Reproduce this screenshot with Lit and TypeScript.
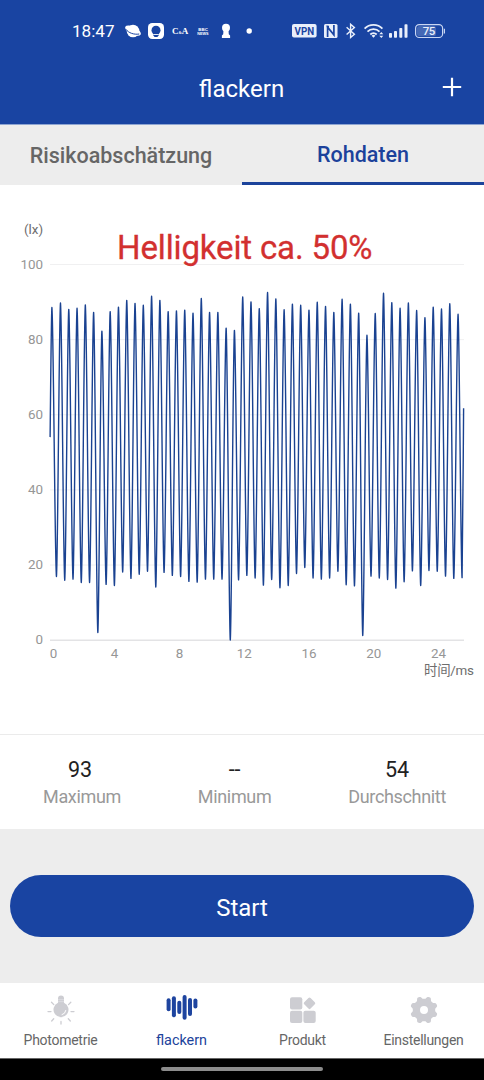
import { LitElement, html, svg, css } from "lit";
import { customElement } from "lit/decorators.js";

const PEAKS = [
  88.5, 89.7, 88, 88.3, 89.2, 87.2, 82.2, 87.4, 88.6, 90.4, 89.6, 89.1, 91.5, 90.4, 87.4, 87.6, 87.8, 87, 90.9, 87.2,
  87.2, 83, 82.4, 91.3, 90, 88.2, 92.5, 90.8, 87.9, 89.4, 89.1, 87.8, 89.9, 88.8, 87.2, 90.7, 89.4, 87, 81.1, 86.9,
  92.3, 89.8, 88.3, 89.7, 87.7, 85.8, 88.6, 88.1, 89.5, 86.7,
];
const TROUGHS = [
  16.9, 15.9, 16.2, 15.3, 15.3, 2, 14.8, 14.5, 18.1, 16.4, 17.5, 18.3, 14.1, 18, 17.2, 16.9, 15.6, 15.4, 16.2, 16.2,
  16.2, 0, 16, 17.2, 16.5, 14.6, 16.1, 13.9, 14.5, 17.7, 19.3, 16.5, 16.2, 16.5, 18.3, 14.7, 14.4, 1.2, 17, 16.5,
  16.1, 13.8, 15.5, 18.4, 14.5, 18.5, 18.3, 17, 16.4, 16.6,
];

const toY = (lux: number) => 455 - lux * 3.757;

function wavePath(): string {
  const pts: [number, number][] = [[50.1, toY(54)]];
  PEAKS.forEach((peak, i) => {
    pts.push([(i === 0 ? 51.9 : 52.2) + i * 8.283, toY(peak)]);
    pts.push([56.45 + i * 8.278, toY(TROUGHS[i])]);
  });
  pts.push([463.6, toY(61.7)]);
  let d = `M${pts[0][0]} ${pts[0][1]}`;
  for (let i = 1; i < pts.length; i++) {
    const [x0, y0] = pts[i - 1];
    const [x1, y1] = pts[i];
    const dx = x1 - x0;
    const dy = y1 - y0;
    const startBend = i === 1 ? 0.4 : 0.04;
    const endBend = i === pts.length - 1 ? 0.4 : 0.04;
    d += `C${x0 + dx * 0.33} ${y0 + dy * startBend} ${x1 - dx * 0.33} ${y1 - dy * endBend} ${x1} ${y1}`;
  }
  return d;
}

@customElement("status-bar")
class StatusBar extends LitElement {
  static styles = css`
    :host { display: flex; align-items: center; height: 62px; padding: 0 37px 0 72px; color: #fff; box-sizing: border-box; }
    .time { font: 400 17.1px/20px Roboto, sans-serif; width: 52px; white-space: nowrap; }
    .left { display: block; width: 130px; height: 20px; }
    .right { display: block; width: 156px; height: 20px; margin-left: auto; }
    .serif { font: 700 9px "Liberation Serif", serif; }
    .amp { font-size: 4px; }
    .micro { font: 700 4.2px "Liberation Sans", sans-serif; }
    .vpn { font: 700 11.5px Roboto, sans-serif; }
    .level { font: 500 11.5px Roboto, sans-serif; }
  `;
  render() {
    return html`
      <span class="time">18:47</span>
      <svg class="left" viewBox="124 21 130 20" fill="#fff">
        <ellipse cx="133" cy="31" rx="6.3" ry="6.3" />
        <ellipse cx="133" cy="30.6" rx="8.6" ry="3.8" transform="rotate(27 133 30.6)" />
        <path d="M126 29.300c2.400 3.600 8 5.600 13.200 4.700" fill="none" stroke="#1944a2" stroke-width="1" />
        <rect x="148" y="23" width="16" height="16" rx="4.2" />
        <circle cx="156" cy="30.2" r="4.5" fill="#1944a2" />
        <path d="M153.400 33h5.200v2.500l-1.200 1.500h-2.800l-1.200-1.500z" fill="#1944a2" />
        <path d="M153.300 34.500h5.400" stroke="#fff" stroke-width="0.900" />
        <text class="serif" x="172" y="34.200">C<tspan class="amp">&amp;</tspan>A</text>
        <text class="micro" x="198.300" y="30.800" textLength="9.500" lengthAdjust="spacingAndGlyphs">BBC</text>
        <text class="micro" x="197.300" y="34.600" textLength="11.200" lengthAdjust="spacingAndGlyphs">NEWS</text>
        <circle cx="226" cy="27.800" r="4" />
        <path d="M223.600 29h4.800l.4 5.200 1.300 1.300v2.500h-8.200v-2.500l1.300-1.300z" />
        <circle cx="249.200" cy="31" r="2.700" />
      </svg>
      <svg class="right" viewBox="291 21 156 20" fill="#e9effb">
        <rect x="292" y="24" width="24.600" height="13.600" rx="2" />
        <text class="vpn" x="294.600" y="35" fill="#1944a2" textLength="19.600" lengthAdjust="spacingAndGlyphs">VPN</text>
        <rect x="324" y="24" width="13.500" height="14" rx="1.500" />
        <path d="M327.600 37v-9.800l6.300 7.600V25M326.500 26.500h2.500" fill="none" stroke="#1944a2" stroke-width="1.700" />
        <path d="M346.600 27.200l7.800 7-3.800 3.300V24.300l3.800 3.300-7.800 7" fill="none" stroke="#e9effb" stroke-width="1.400" />
        <g fill="none" stroke="#e9effb" stroke-width="1.800">
          <path d="M364.600 28.600a12.600 12.600 0 0 1 17.800 0" />
          <path d="M367.500 31.700a8.500 8.500 0 0 1 12 0" />
          <path d="M370.300 34.500a4.600 4.600 0 0 1 6.400 0" />
        </g>
        <path d="M371.600 35.700a2.800 2.800 0 0 1 3.800 0l-1.900 2.100z" />
        <path d="M379.300 34.300l2-2.300 2 2.300zM379.300 35.700l2 2.300 2-2.300z" />
        <rect x="389" y="33" width="3" height="4.800" rx=".8" />
        <rect x="394" y="31" width="3" height="6.800" rx=".8" />
        <rect x="399.300" y="28" width="3" height="9.800" rx=".8" />
        <rect x="404.500" y="24.200" width="3" height="13.600" rx=".8" />
        <rect x="415.600" y="24.700" width="27" height="12.800" rx="3.600" fill="none" stroke="#c9d6f2" stroke-width="1.200" />
        <rect x="417" y="26" width="19" height="10.200" rx="2.500" fill="#4468b5" />
        <path d="M443.800 28.800h1.200v4.600h-1.200z" fill="#c9d6f2" />
        <text class="level" x="422.800" y="35.200" textLength="12.500">75</text>
      </svg>
    `;
  }
}

@customElement("flicker-chart")
class FlickerChart extends LitElement {
  static styles = css`
    :host { display: block; height: 549px; background: #fff; }
    .chart { display: block; width: 484px; height: 549px; font: 400 13.4px Roboto, "Noto Sans CJK SC", sans-serif; }
    .tick { fill: #969696; }
    .unit { fill: #6e6e6e; }
    .note { font-size: 33px; fill: #d2302f; stroke: #d2302f; stroke-width: 0.300px; }
    .grid { stroke: #f0f0f1; stroke-width: 1; }
    .axis { stroke: #e3e3e5; stroke-width: 1.500; }
    .wave { fill: none; stroke: #1a4291; stroke-width: 1.400; stroke-linejoin: round; }
  `;
  render() {
    return html`
      <svg class="chart" viewBox="0 0 484 549">
        ${[100, 80, 60, 40, 20, 0].map(
          (v) => svg`
            <line class=${v ? "grid" : "axis"} x1="50" x2="464" y1=${toY(v) + 0.2} y2=${toY(v) + 0.2} />
            <text class="tick" x="43" y=${toY(v) + 4.3} text-anchor="end">${v}</text>`
        )}
        ${[0, 4, 8, 12, 16, 20, 24].map(
          (t) => svg`<text class="tick" x=${t ? 49.8 + t * 16.2 : 53.4} y="473.300" text-anchor="middle">${t}</text>`
        )}
        <path class="wave" d=${wavePath()} />
        <text class="unit" x="24" y="49">(lx)</text>
        <text class="unit" x="424" y="490" textLength="50">时间/ms</text>
        <text class="note" x="117" y="74" textLength="255.500">Helligkeit ca. 50%</text>
      </svg>
    `;
  }
}

@customElement("app-root")
class AppRoot extends LitElement {
  static styles = css`
    :host { display: flex; flex-direction: column; width: 484px; height: 1080px; overflow: hidden; background: #ededed; font-family: Roboto, sans-serif; }
    .top { height: 125px; flex: none; background: #1944a2; color: #fff; border-bottom: 1px solid #8ea5d2; box-sizing: border-box; }
    .header { display: grid; grid-template-columns: 44px 1fr 44px; height: 53px; padding: 0 10px; align-items: center; }
    .title { grid-column: 2; text-align: center; font-size: 24px; line-height: 30px; padding-right: 1px; }
    .plus { display: block; width: 20px; height: 20px; margin: -3px 0 0 12px; }
    .tabs { display: grid; grid-template-columns: 1fr 1fr; height: 60px; flex: none; background: #ededed; }
    .tab { display: flex; align-items: center; justify-content: center; font-weight: 500; font-size: 21.500px; color: #666; padding-top: 1px; }
    .tab.active { color: #1c429b; border-bottom: 3px solid #1c439b; padding-top: 2px; }
    .stats { display: flex; justify-content: space-between; box-sizing: border-box; height: 95px; flex: none; padding: 21px 38px 0 43px; background: #fff; border-top: 1px solid #ebebeb; }
    .stat { display: flex; flex-direction: column; align-items: center; }
    .value { font-size: 21.500px; line-height: 28px; color: #222; }
    .value.first { padding-right: 4px; }
    .label { font-size: 18px; line-height: 26px; color: #999; letter-spacing: -0.33px; }
    .action { flex: 1; padding: 46px 10px 0; }
    .start { display: block; width: 100%; height: 62px; border: 0; border-radius: 31px; background: #1944a2; color: #fff; font: 400 24px/30px Roboto, sans-serif; padding: 3px 0 0; }
    .nav { display: grid; grid-template-columns: repeat(4, 1fr); height: 75px; flex: none; background: #fff; }
    .item { display: flex; flex-direction: column; align-items: center; padding-top: 10px; font-size: 14px; letter-spacing: -0.27px; line-height: 18px; color: #666; }
    .item.on { color: #1c439b; font-size: 14.4px; letter-spacing: 0; }
    .icon { width: 34px; height: 34px; margin-bottom: 4px; fill: #cdcdd2; }
    .item.on .icon { fill: #1e449f; margin-bottom: 5px; }
    .gesture { display: flex; justify-content: center; height: 22px; flex: none; background: #000; border-top: 1px solid #666; box-sizing: border-box; padding-top: 8px; }
    .pill { width: 162px; height: 4px; border-radius: 2px; background: #8c8c8c; }
  `;

  private stats = [
    { value: "93", label: "Maximum" },
    { value: "--", label: "Minimum" },
    { value: "54", label: "Durchschnitt" },
  ];

  private gearPath(): string {
    const pts: string[] = [];
    for (let i = 0; i < 96; i++) {
      const a = (i / 96) * Math.PI * 2;
      const s = Math.cos(8 * a + Math.PI);
      const r = 12.5 + 1.3 * Math.max(-1, Math.min(1, s * 1.6));
      pts.push(`${(17 + r * Math.cos(a)).toFixed(2)} ${(17 + r * Math.sin(a)).toFixed(2)}`);
    }
    return `M${pts.join("L")}ZM21 17a4 4 0 1 0-8 0a4 4 0 1 0 8 0Z`;
  }

  render() {
    return html`
      <div class="top">
        <status-bar></status-bar>
        <div class="header">
          <div class="title">flackern</div>
          <svg class="plus" viewBox="0 0 20 20"><path d="M10 .8v18.400M.8 10h18.400" stroke="#fff" stroke-width="2.200" /></svg>
        </div>
      </div>
      <div class="tabs">
        <div class="tab">Risikoabschätzung</div>
        <div class="tab active">Rohdaten</div>
      </div>
      <flicker-chart></flicker-chart>
      <div class="stats">
        ${this.stats.map(
          (s, i) => html`<div class="stat">
            <span class="value ${i === 0 ? "first" : ""}">${s.value}</span>
            <span class="label">${s.label}</span>
          </div>`
        )}
      </div>
      <div class="action"><button class="start">Start</button></div>
      <div class="nav">
        <div class="item">
          <svg class="icon" viewBox="0 0 34 34">
            <path d="M14 5.500a3 3 0 0 1 6 0v4.300a7.500 7.500 0 1 1-6 0z" />
            <path d="M14 6.700h6M14 8.700h6" stroke="#e9e9ec" stroke-width=".6" />
            <path d="M21.800 17.500a5 5 0 0 1-3.800 4.200" fill="none" stroke="#fff" stroke-width="1" stroke-linecap="round" />
            <path d="M4 18.600h3M27 18.600h3M17 28.500v2.600M7.500 9.300l2.300 2.300M26.800 9.300l-2.300 2.300M7.700 28l2-2.300M26.300 28l-2-2.300" stroke="#cdcdd2" stroke-width="1.300" stroke-linecap="round" />
          </svg>
          <span>Photometrie</span>
        </div>
        <div class="item on">
          <svg class="icon" viewBox="0 0 34 34">
            <rect x="1.600" y="5.200" width="4" height="13" rx="2" />
            <rect x="6.900" y="3.200" width="4" height="21" rx="2" />
            <rect x="12.300" y="7.700" width="4" height="13.300" rx="2" />
            <rect x="17.600" y="2" width="4" height="24.800" rx="2" />
            <rect x="23" y="5" width="4" height="18" rx="2" />
            <rect x="28.400" y="5.600" width="4" height="10" rx="2" />
          </svg>
          <span>flackern</span>
        </div>
        <div class="item">
          <svg class="icon" viewBox="0 0 34 34">
            <rect x="4" y="4.300" width="12.300" height="12.300" rx="2" />
            <rect x="4" y="17.700" width="12.300" height="12.300" rx="2" />
            <rect x="17.400" y="17.700" width="12.300" height="12.300" rx="2" />
            <rect x="19" y="5.800" width="9" height="9" rx="1.500" transform="rotate(45 23.500 10.300)" />
          </svg>
          <span>Produkt</span>
        </div>
        <div class="item">
          <svg class="icon" viewBox="0 0 34 34"><path d=${this.gearPath()} fill-rule="evenodd" /></svg>
          <span>Einstellungen</span>
        </div>
      </div>
      <div class="gesture"><div class="pill"></div></div>
    `;
  }
}
